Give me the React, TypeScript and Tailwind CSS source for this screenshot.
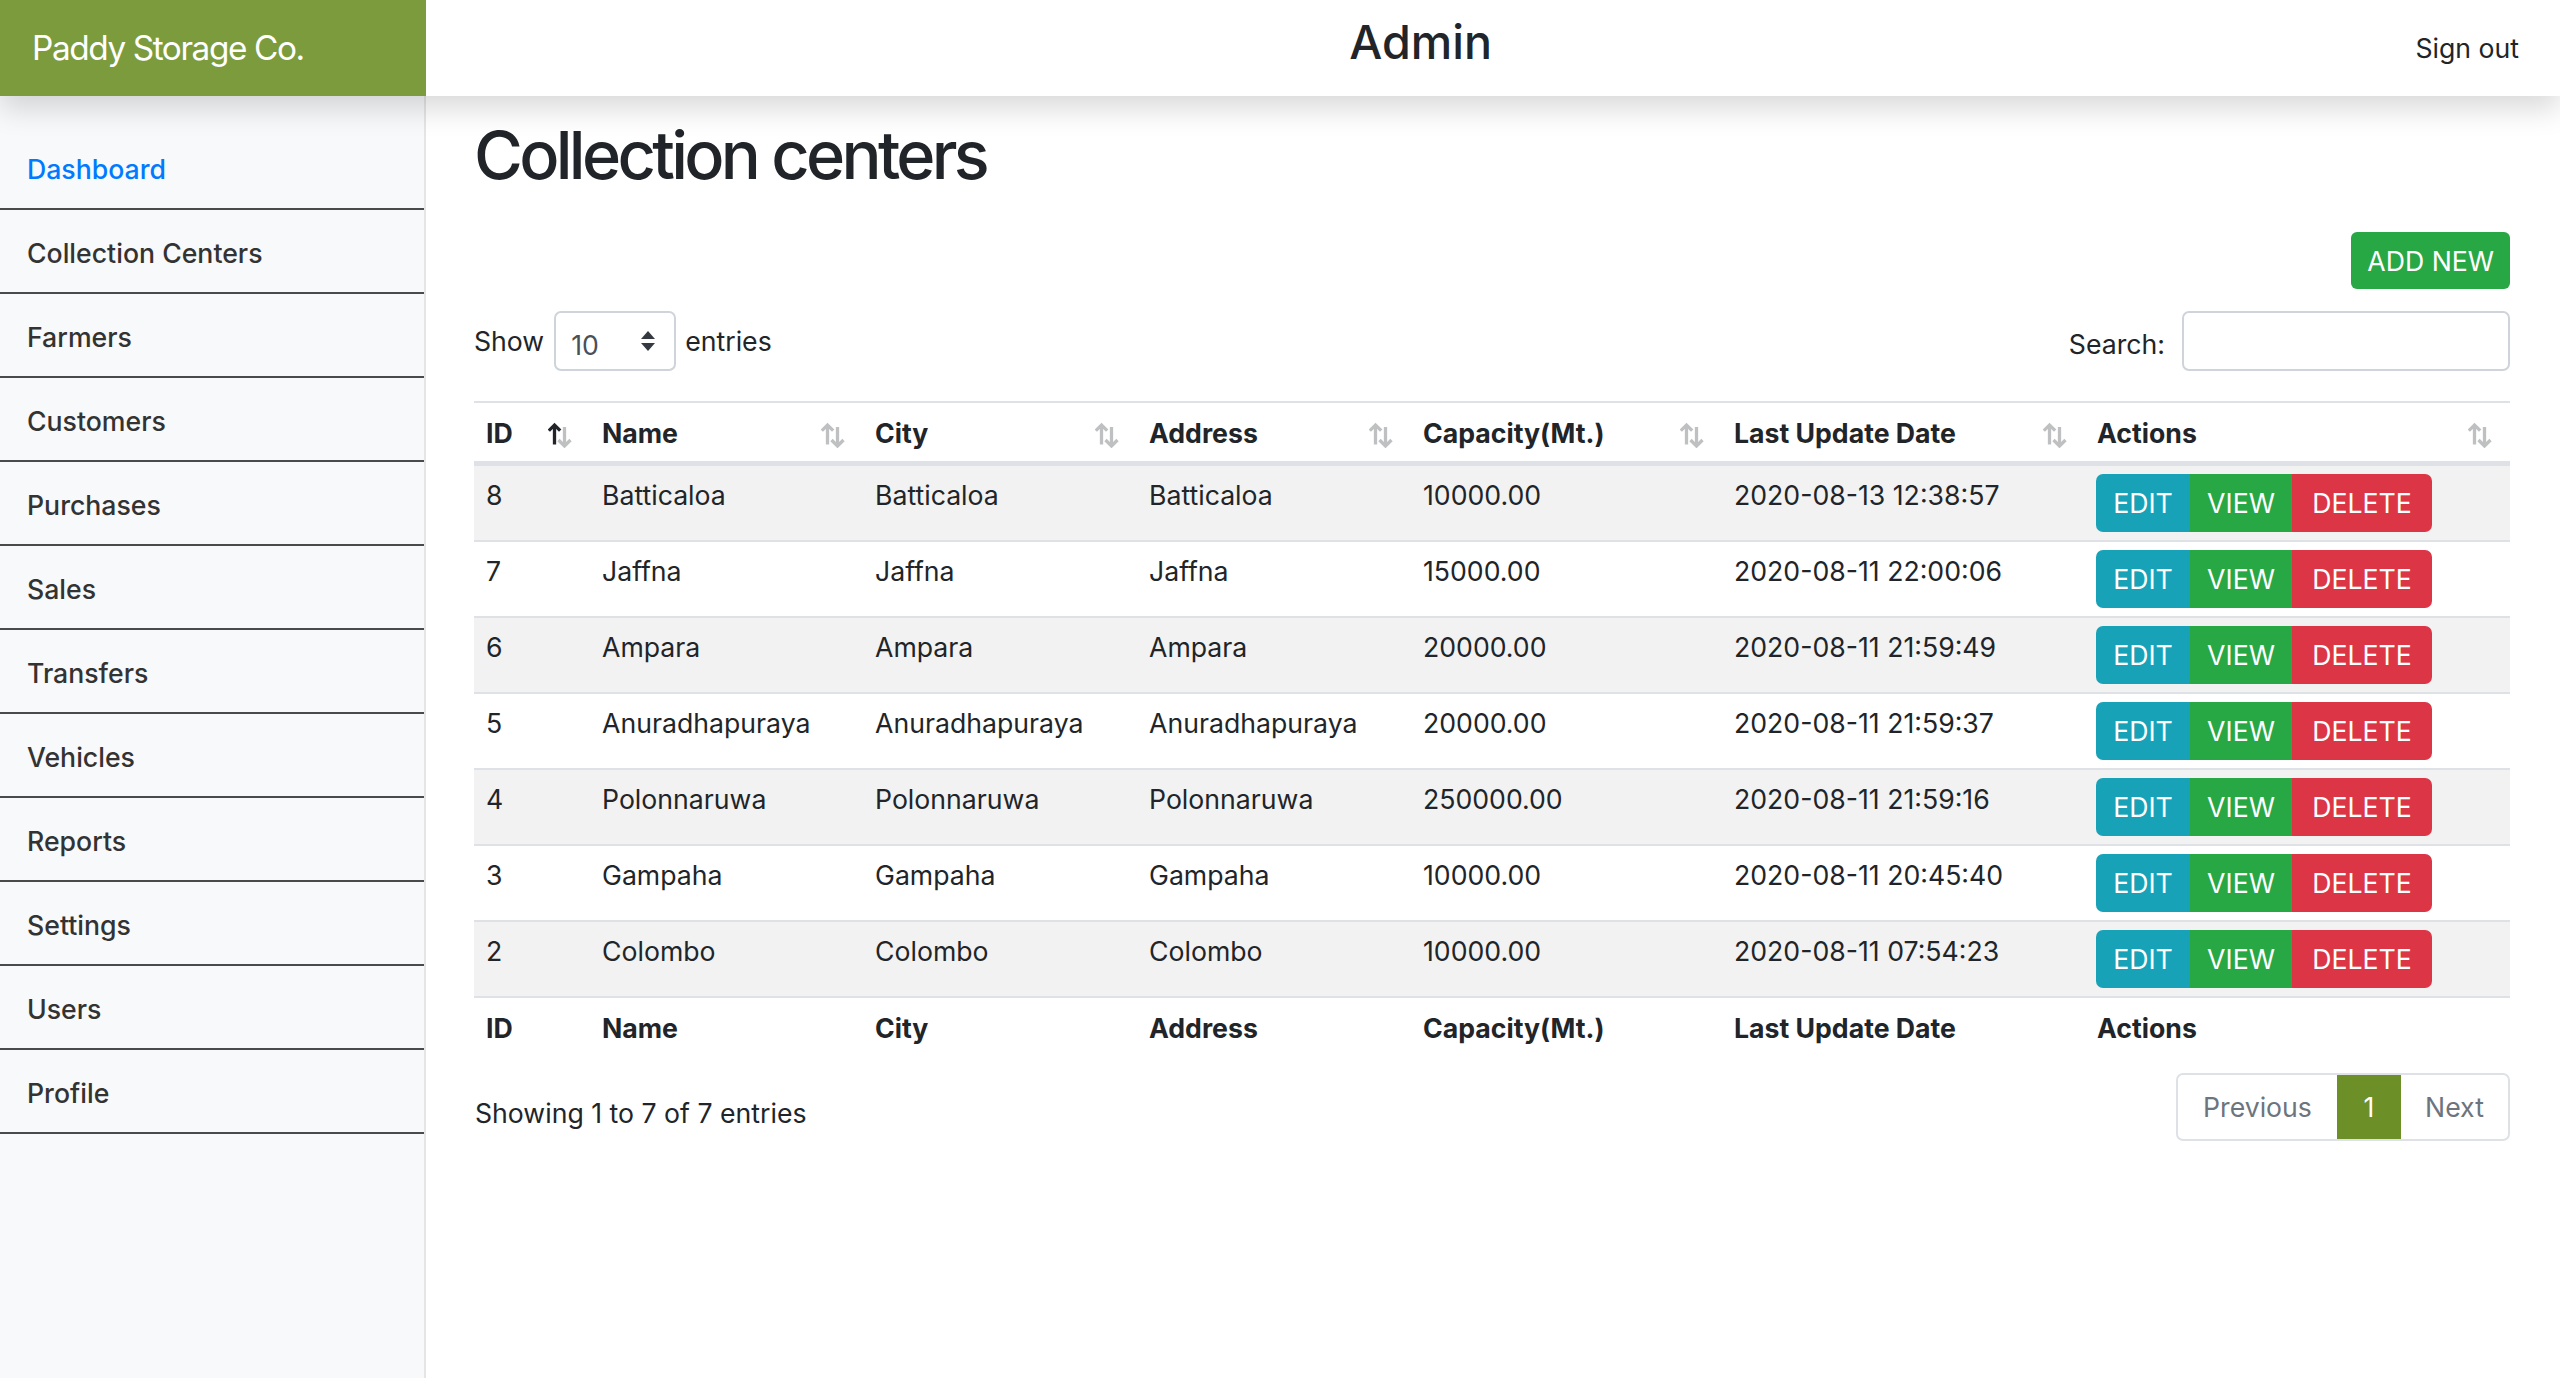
import React from "react";

const navItems = [
  "Dashboard",
  "Collection Centers",
  "Farmers",
  "Customers",
  "Purchases",
  "Sales",
  "Transfers",
  "Vehicles",
  "Reports",
  "Settings",
  "Users",
  "Profile",
];

const rows = [
  ["8", "Batticaloa", "10000.00", "2020-08-13 12:38:57"],
  ["7", "Jaffna", "15000.00", "2020-08-11 22:00:06"],
  ["6", "Ampara", "20000.00", "2020-08-11 21:59:49"],
  ["5", "Anuradhapuraya", "20000.00", "2020-08-11 21:59:37"],
  ["4", "Polonnaruwa", "250000.00", "2020-08-11 21:59:16"],
  ["3", "Gampaha", "10000.00", "2020-08-11 20:45:40"],
  ["2", "Colombo", "10000.00", "2020-08-11 07:54:23"],
];

const columns = [
  { label: "ID", w: "w-[116px]" },
  { label: "Name", w: "w-[273px]" },
  { label: "City", w: "w-[274px]" },
  { label: "Address", w: "w-[274px]" },
  { label: "Capacity(Mt.)", w: "w-[311px]" },
  { label: "Last Update Date", w: "w-[363px]" },
  { label: "Actions", w: "w-[425px]" },
];

function SortIcon({ active }: { active: boolean }) {
  const up = active ? "#212529" : "#bfc0c1";
  const down = "#bfc0c1";
  return (
    <svg width="24" height="26" viewBox="0 0 24 26" className="absolute right-[18px] top-[19px]">
      <g fill="none" strokeWidth="3.3" strokeLinecap="butt" strokeLinejoin="miter">
        <path d="M16.5 5 V24" stroke={down} />
        <path d="M10.5 18 L16.5 24 L22.5 18" stroke={down} />
        <path d="M6.5 3 V22.5" stroke={up} />
        <path d="M0.8 8.7 L6.5 3 L12.2 8.7" stroke={up} />
      </g>
    </svg>
  );
}

export default function App() {
  return (
    <div className="min-h-screen bg-white font-['Inter',sans-serif] text-[26.67px] leading-[40px] text-[#212529]">
      <header className="relative z-10 flex h-[96px] items-center bg-white shadow-[0_13px_27px_rgba(0,0,0,0.15)]">
        <div className="flex h-full w-[426px] shrink-0 items-center bg-[#7b9b3c] pl-[32px] text-[33.33px] tracking-[-1.4px] text-white">
          Paddy Storage Co.
        </div>
        <div className="mb-[13px] flex-1 text-center text-[46.67px] leading-[56px] font-medium">Admin</div>
        <div className="pr-[41px] text-[26.67px] text-[#212529]">Sign out</div>
      </header>

      <div className="flex">
        <aside className="min-h-[1282px] w-[426px] shrink-0 border-r-2 border-[#e5e5e5] bg-[#f8f9fa] pt-[30px]">
          {navItems.map((item, i) => (
            <div
              key={item}
              className={`flex h-[84px] items-center border-b-2 border-[#4a4a4a] pl-[27px] pt-[4px] font-medium ${
                i === 0 ? "text-[#007bff]" : "text-[#333333]"
              }`}
            >
              {item}
            </div>
          ))}
        </aside>

        <main className="min-w-0 flex-1 pl-[48px] pr-[50px]">
          <h1 className="mt-[19px] text-[66.67px] leading-[80px] font-medium tracking-[-3.7px]">Collection centers</h1>

          <div className="mt-[37px] flex justify-end">
            <button className="flex h-[57px] items-center rounded-[6px] bg-[#28a745] px-[16px] text-white">
              ADD NEW
            </button>
          </div>

          <div className="mt-[22px] flex h-[60px] items-center justify-between">
            <div className="flex items-center">
              <span>Show</span>
              <div className="ml-[10px] flex h-[60px] w-[122px] items-center justify-between rounded-[7px] border-2 border-[#ced4da] pl-[15px] pr-[18px] pt-[8px]">
                <span className="text-[#495057]">10</span>
                <svg width="16" height="22" viewBox="0 0 16 22" className="-mt-[8px]">
                  <path d="M8 1 L15 9 H1 Z" fill="#343a40" />
                  <path d="M8 21 L15 13 H1 Z" fill="#343a40" />
                </svg>
              </div>
              <span className="ml-[9px]">entries</span>
            </div>
            <div className="flex items-center">
              <span className="pt-[6px]">Search:</span>
              <div className="ml-[17px] h-[60px] w-[328px] rounded-[7px] border-2 border-[#ced4da] bg-white" />
            </div>
          </div>

          <table className="mt-[30px] w-full table-fixed border-separate border-spacing-0">
            <thead>
              <tr>
                {columns.map((c, i) => (
                  <th
                    key={c.label}
                    className={`relative ${c.w} border-t-2 border-b-[3px] border-[#dee2e6] pb-[8px] pl-[12px] pt-[10px] text-left font-bold`}
                  >
                    {c.label}
                    <SortIcon active={i === 0} />
                  </th>
                ))}
              </tr>
            </thead>
            <tbody>
              {rows.map((r, i) => (
                <tr key={r[0]} className={i % 2 === 0 ? "bg-[#f2f2f2]" : "bg-white"}>
                  <td className="border-t-2 border-[#dee2e6] pl-[12px] pt-[9px] align-top">{r[0]}</td>
                  <td className="border-t-2 border-[#dee2e6] pl-[12px] pt-[9px] align-top">{r[1]}</td>
                  <td className="border-t-2 border-[#dee2e6] pl-[12px] pt-[9px] align-top">{r[1]}</td>
                  <td className="border-t-2 border-[#dee2e6] pl-[12px] pt-[9px] align-top">{r[1]}</td>
                  <td className="border-t-2 border-[#dee2e6] pl-[12px] pt-[9px] align-top">{r[2]}</td>
                  <td className="border-t-2 border-[#dee2e6] pl-[12px] pt-[9px] align-top">{r[3]}</td>
                  <td className="border-t-2 border-[#dee2e6] py-[8px] pl-[11px] align-top">
                    <div className="flex h-[58px] w-fit overflow-hidden rounded-[7px] text-white">
                      <span className="flex w-[94px] items-center justify-center bg-[#17a2b8]">EDIT</span>
                      <span className="flex w-[102px] items-center justify-center bg-[#28a745]">VIEW</span>
                      <span className="flex w-[140px] items-center justify-center bg-[#dc3545]">DELETE</span>
                    </div>
                  </td>
                </tr>
              ))}
            </tbody>
            <tfoot>
              <tr>
                {columns.map((c) => (
                  <th
                    key={c.label}
                    className="border-t-2 border-[#dee2e6] pb-[8px] pl-[12px] pt-[10px] text-left font-bold"
                  >
                    {c.label}
                  </th>
                ))}
              </tr>
            </tfoot>
          </table>

          <div className="mt-[17px] flex items-start justify-between">
            <div className="pl-[1px] pt-[20px]">Showing 1 to 7 of 7 entries</div>
            <div className="flex h-[68px] overflow-hidden rounded-[7px] border-2 border-[#dee2e6]">
              <span className="flex w-[159px] items-center justify-center text-[#6c757d]">Previous</span>
              <span className="flex w-[64px] items-center justify-center bg-[#6d8f27] text-white">1</span>
              <span className="flex w-[107px] items-center justify-center text-[#6c757d]">Next</span>
            </div>
          </div>
        </main>
      </div>
    </div>
  );
}
